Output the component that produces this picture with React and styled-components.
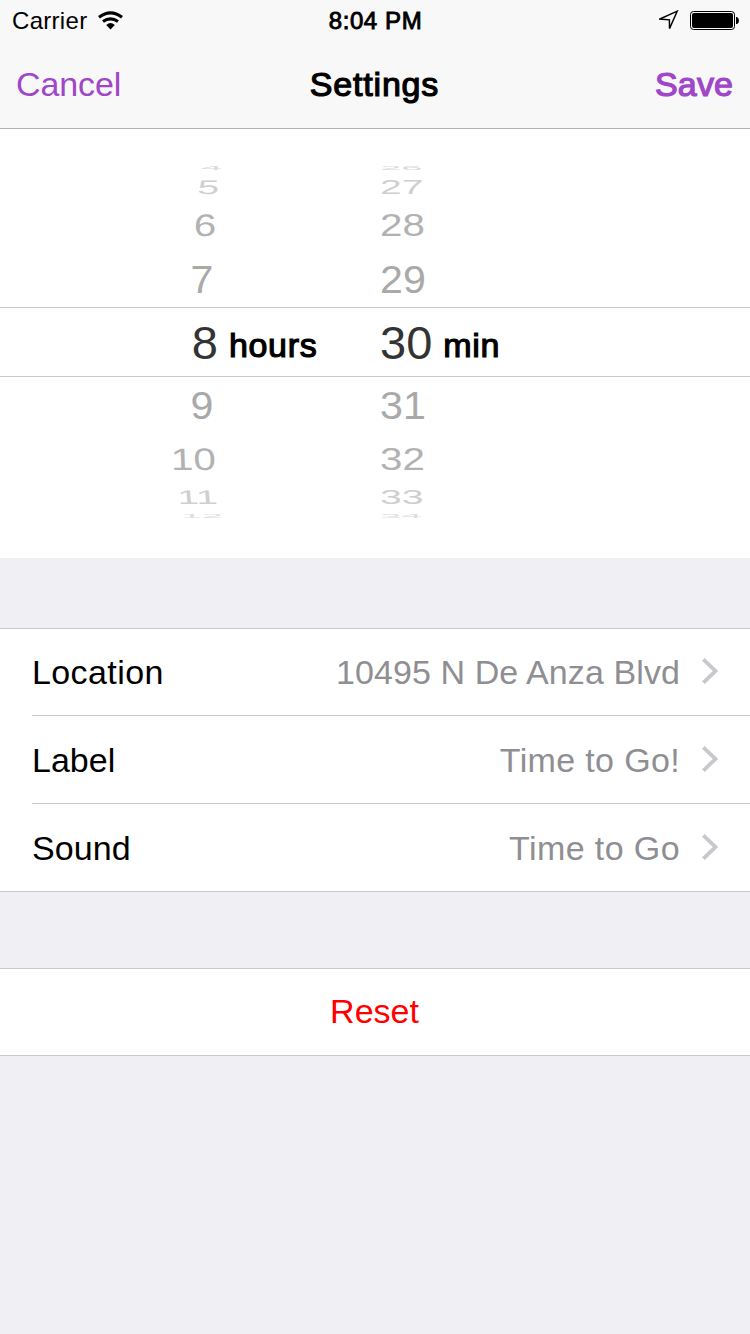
import React from "react";
import styled, { createGlobalStyle, css } from "styled-components";

const Global = createGlobalStyle`
  * { box-sizing: border-box; }
  body { margin: 0; background: #efeff4; font-family: "Liberation Sans", Arial, sans-serif; }
`;

const medium = css`
  font-weight: 400;
  -webkit-text-stroke: ${(p) => p.$stroke || 1.2}px currentColor;
`;

const Screen = styled.main`
  width: 750px;
  height: 1334px;
  overflow: hidden;
  background: #efeff4;
  color: #000;
  font-size: 34px;
`;

const Header = styled.header`
  height: 129px;
  background: #f8f8f8;
  border-bottom: 1px solid #b2b2b2;
`;

const StatusBar = styled.div`
  display: grid;
  grid-template-columns: 1fr auto 1fr;
  align-items: center;
  height: 40px;
  padding: 0 11px 0 12px;
  font-size: 24px;
`;

const StatusGroup = styled.div`
  display: flex;
  align-items: center;
  justify-content: ${(p) => (p.$end ? "flex-end" : "flex-start")};
  gap: 11px;
`;

const Carrier = styled.span`
  line-height: 40px;
  padding-top: 1px;
  letter-spacing: 0.3px;
`;

const Clock = styled.span`
  ${medium}
  line-height: 40px;
  padding-top: 1px;
  letter-spacing: 0.6px;
`;

const NavBar = styled.nav`
  display: grid;
  grid-template-columns: 1fr auto 1fr;
  align-items: center;
  height: 88px;
  padding: 0 17px 0 16px;
`;

const NavButton = styled.button`
  justify-self: start;
  padding: 0;
  border: 0;
  background: none;
  color: #a046c8;
  font: inherit;
  letter-spacing: -0.1px;
`;

const PrimaryNavButton = styled(NavButton)`
  ${medium}
  justify-self: end;
  letter-spacing: 0.1px;
`;

const Title = styled.h1`
  ${medium}
  margin: 0;
  font-size: 34px;
  letter-spacing: 0.8px;
`;

const Picker = styled.section`
  height: 429px;
  padding-top: 31px;
  background: #fff;
`;

const PickerRow = styled.div`
  display: grid;
  grid-template-columns: 218px 162px 1fr;
  grid-template-rows: 100%;
  align-items: center;
  height: ${(p) => p.$h}px;
  color: ${(p) => p.$color};
  font-size: 42px;
  line-height: 42px;
`;

const SelectedRow = styled(PickerRow)`
  grid-template-columns: 218px 162px auto 1fr;
  border-top: 1px solid #c8c8c8;
  border-bottom: 1px solid #c8c8c8;
  font-size: 47px;
  line-height: 47px;
`;

const Digits = styled.span`
  justify-self: ${(p) => (p.$hour ? "end" : "start")};
  transform-origin: ${(p) => (p.$hour ? "100%" : "0%")} 50%;
  transform: translateX(${(p) => p.$dx || 0}px) skewX(${(p) => p.$skew || 0}deg)
    scale(${(p) => p.$sx || 1}, ${(p) => p.$sy || 1});
`;

const MinuteDigits = styled(Digits)`
  grid-column: 3;
`;

const Unit = styled.span`
  ${medium}
  padding: 6px 0 0 11px;
  color: #000;
  font-size: 34px;
  letter-spacing: 0.65px;
`;

const Group = styled.section`
  margin-top: ${(p) => p.$gap}px;
  border-top: 1px solid #c8c7cc;
  border-bottom: 1px solid #c8c7cc;
  background: #fff;
`;

const Cell = styled.div`
  display: flex;
  align-items: center;
  height: ${(p) => p.$h}px;
  margin-left: 32px;
  padding: 1px 32px 0 0;
  border-bottom: ${(p) => (p.$last ? 0 : 1)}px solid #c8c7cc;
`;

const CellLabel = styled.span`
  flex: 1;
  letter-spacing: ${(p) => p.$track}px;
`;

const CellValue = styled.span`
  margin-right: 22px;
  color: #8e8e93;
  letter-spacing: ${(p) => p.$track}px;
`;

const ChevronIcon = styled.svg`
  margin-bottom: 3px;
`;

const ResetButton = styled.button`
  display: block;
  width: 100%;
  height: 86px;
  padding: 0 1px 2px 0;
  border: 0;
  background: none;
  color: #f00;
  font: inherit;
`;

const StatusIcon = styled.svg`
  margin-bottom: ${(p) => p.$lift || 0}px;
`;

const Wifi = () => (
  <StatusIcon $lift={1} width="26" height="19" viewBox="0 0 26 19">
    <g fill="none" stroke="#000" strokeWidth="3.1">
      <path d="M1 6.2Q12.5 -2.6 24 6.2" />
      <path d="M5 10.6Q12.5 5 20 10.6" />
    </g>
    <path d="M8.2 13.9Q12.5 10.3 16.8 13.9L12.5 18.5Z" />
  </StatusIcon>
);

const LocationArrow = () => (
  <StatusIcon $lift={2} width="20" height="20" viewBox="0 0 20 20">
    <path d="M0.9 9L18.2 1.2L10.5 18.6L10.4 9.8Z" fill="none" stroke="#000" strokeWidth="1.45" />
  </StatusIcon>
);

const Battery = () => (
  <StatusIcon width="49" height="19" viewBox="0 0 49 19">
    <rect x="0.5" y="0.5" width="44" height="18" rx="3" fill="none" stroke="#000" />
    <rect x="2" y="2" width="41" height="15" rx="2" />
    <path d="M46 6H47Q49 7 49 9.5T47 13H46Z" />
  </StatusIcon>
);

const Chevron = () => (
  <ChevronIcon width="16" height="26" viewBox="0 0 16 26">
    <path d="M1.4 1.4L13.4 13L1.4 24.6" fill="none" stroke="#c7c7cc" strokeWidth="3.8" />
  </ChevronIcon>
);

const above = [
  { h: 16, hour: "4", min: "26", color: "#dadada", sy: 0.13, sx: 0.91, dx: 4 },
  { h: 22, hour: "5", min: "27", color: "#cfcfcf", sy: 0.47, sx: 0.93, dx: 1, skew: -5 },
  { h: 55, hour: "6", min: "28", color: "#b2b2b2", sy: 0.74, sx: 0.96, dx: -2, skew: -2 },
  { h: 54, hour: "7", min: "29", color: "#a9a9a9", sy: 0.93, sx: 0.98, dx: -5 },
];

const below = [
  { h: 57, hour: "9", min: "31", color: "#a9a9a9", sy: 0.93, sx: 0.98, dx: -5 },
  { h: 51, hour: "10", min: "32", color: "#b2b2b2", sy: 0.74, sx: 0.96, dx: -2, skew: 2 },
  { h: 24, hour: "11", min: "33", color: "#cfcfcf", sy: 0.47, sx: 0.93, dx: 0, skew: 5 },
  { h: 14, hour: "12", min: "34", color: "#dedede", sy: 0.13, sx: 0.9, dx: 5 },
];

const WheelRow = ({ row }) => (
  <PickerRow $h={row.h} $color={row.color}>
    <Digits $hour $sx={row.sx} $sy={row.sy} $dx={row.dx} $skew={row.skew}>{row.hour}</Digits>
    <MinuteDigits $sx={row.sx} $sy={row.sy}>{row.min}</MinuteDigits>
  </PickerRow>
);

const cells = [
  { label: "Location", value: "10495 N De Anza Blvd", h: 87, labelTrack: 0.4, valueTrack: 0.1 },
  { label: "Label", value: "Time to Go!", h: 88, labelTrack: 0, valueTrack: 0.35 },
  { label: "Sound", value: "Time to Go", h: 87, labelTrack: 0.1, valueTrack: 0.4 },
];

export default function App() {
  return (
    <Screen>
      <Global />
      <Header>
        <StatusBar>
          <StatusGroup>
            <Carrier>Carrier</Carrier>
            <Wifi />
          </StatusGroup>
          <Clock $stroke={0.9}>8:04 PM</Clock>
          <StatusGroup $end>
            <LocationArrow />
            <Battery />
          </StatusGroup>
        </StatusBar>
        <NavBar>
          <NavButton>Cancel</NavButton>
          <Title>Settings</Title>
          <PrimaryNavButton>Save</PrimaryNavButton>
        </NavBar>
      </Header>
      <Picker>
        {above.map((row) => <WheelRow key={row.hour} row={row} />)}
        <SelectedRow $h={70} $color="#333">
          <Digits $hour>8</Digits>
          <Unit>hours</Unit>
          <Digits>30</Digits>
          <Unit>min</Unit>
        </SelectedRow>
        {below.map((row) => <WheelRow key={row.hour} row={row} />)}
      </Picker>
      <Group $gap={70}>
        {cells.map((cell, i) => (
          <Cell key={cell.label} $h={cell.h} $last={i === cells.length - 1}>
            <CellLabel $track={cell.labelTrack}>{cell.label}</CellLabel>
            <CellValue $track={cell.valueTrack}>{cell.value}</CellValue>
            <Chevron />
          </Cell>
        ))}
      </Group>
      <Group $gap={76}>
        <ResetButton>Reset</ResetButton>
      </Group>
    </Screen>
  );
}
